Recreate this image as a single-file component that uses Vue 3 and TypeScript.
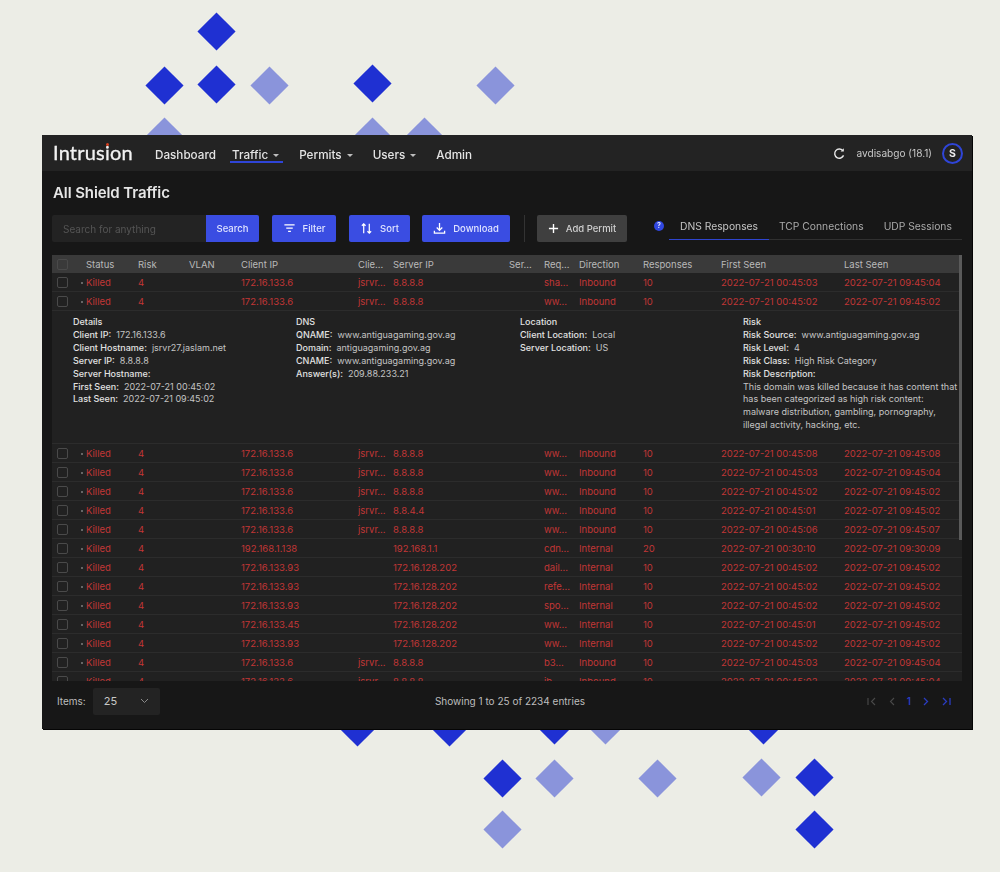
<script setup lang="ts">
interface Row {
  client: string
  host: string
  server: string
  req: string
  dir: string
  resp: string
  first: string
  last: string
  detail?: boolean
}
const r = (client: string, host: string, server: string, req: string, dir: string, resp: string, first: string, last: string, detail = false): Row => ({ client, host, server, req, dir, resp, first: '2022-07-21 ' + first, last: '2022-07-21 ' + last, detail })
const J = 'jsrvr...'
const rows: Row[] = [
  r('172.16.133.6', J, '8.8.8.8', 'sha...', 'Inbound', '10', '00:45:03', '09:45:04'),
  r('172.16.133.6', J, '8.8.8.8', 'ww...', 'Inbound', '10', '00:45:02', '09:45:02', true),
  r('172.16.133.6', J, '8.8.8.8', 'ww...', 'Inbound', '10', '00:45:08', '09:45:08'),
  r('172.16.133.6', J, '8.8.8.8', 'ww...', 'Inbound', '10', '00:45:03', '09:45:04'),
  r('172.16.133.6', J, '8.8.8.8', 'ww...', 'Inbound', '10', '00:45:02', '09:45:02'),
  r('172.16.133.6', J, '8.8.4.4', 'ww...', 'Inbound', '10', '00:45:01', '09:45:02'),
  r('172.16.133.6', J, '8.8.8.8', 'ww...', 'Inbound', '10', '00:45:06', '09:45:07'),
  r('192.168.1.138', '', '192.168.1.1', 'cdn...', 'Internal', '20', '00:30:10', '09:30:09'),
  r('172.16.133.93', '', '172.16.128.202', 'dail...', 'Internal', '10', '00:45:02', '09:45:02'),
  r('172.16.133.93', '', '172.16.128.202', 'refe...', 'Internal', '10', '00:45:02', '09:45:02'),
  r('172.16.133.93', '', '172.16.128.202', 'spo...', 'Internal', '10', '00:45:02', '09:45:02'),
  r('172.16.133.45', '', '172.16.128.202', 'ww...', 'Internal', '10', '00:45:01', '09:45:02'),
  r('172.16.133.93', '', '172.16.128.202', 'ww...', 'Internal', '10', '00:45:02', '09:45:02'),
  r('172.16.133.6', J, '8.8.8.8', 'b3...', 'Inbound', '10', '00:45:03', '09:45:04'),
  r('172.16.133.6', J, '8.8.8.8', 'ib...', 'Inbound', '10', '00:45:03', '09:45:04'),
]
const diamonds: [number, number, boolean][] = [
  [217, 32, false], [165, 86, false], [217, 85, false], [270, 86, true], [373, 84, false], [496, 86, true],
  [165, 137, true], [373, 137, true], [425, 137, true],
  [358, 728, false], [450, 728, false], [555, 726, false], [606, 726, true], [764, 726, false],
  [503, 779, false], [555, 779, true], [658, 779, true], [762, 778, true], [815, 778, false],
  [503, 830, true], [815, 830, false],
]
const pos = (d: [number, number, boolean]) => ({ left: d[0] - 14 + 'px', top: d[1] - 14 + 'px' })
const heads = ['Status', 'Risk', 'VLAN', 'Client IP', 'Clie...', 'Server IP', 'Ser...', 'Req...', 'Direction', 'Responses', 'First Seen', 'Last Seen']
const details = [['Client IP:', '172.16.133.6'], ['Client Hostname:', 'jsrvr27.jaslam.net'], ['Server IP:', '8.8.8.8'], ['Server Hostname:', ''], ['First Seen:', '2022-07-21 00:45:02'], ['Last Seen:', '2022-07-21 09:45:02']]
const dns = [['QNAME:', 'www.antiguagaming.gov.ag'], ['Domain:', 'antiguagaming.gov.ag'], ['CNAME:', 'www.antiguagaming.gov.ag'], ['Answer(s):', '209.88.233.21']]
const loc = [['Client Location:', 'Local'], ['Server Location:', 'US']]
const risk = [['Risk Source:', 'www.antiguagaming.gov.ag'], ['Risk Level:', '4'], ['Risk Class:', 'High Risk Category'], ['Risk Description:', '']]
</script>

<template>
  <div class="page">
    <i v-for="(d, i) in diamonds" :key="i" class="dm" :class="{ light: d[2] }" :style="pos(d)"></i>
    <main class="panel">
      <header class="top">
        <div class="logo">Intrusion<i class="logodot"></i></div>
        <nav class="nav">
          <a>Dashboard</a>
          <a class="active">Traffic<b class="caret"></b></a>
          <a>Permits<b class="caret"></b></a>
          <a>Users<b class="caret"></b></a>
          <a>Admin</a>
        </nav>
        <div class="user">
          <svg width="13" height="13" viewBox="0 0 24 24" fill="none" stroke="#e8e8e8" stroke-width="2.6"><path d="M19.5 15.5A8.5 8.5 0 1 1 18 6.5" /><path d="M20 2.5v6h-6" fill="#e8e8e8" stroke="none" /></svg>
          <span>avdisabgo (18.1)</span>
          <span class="avatar">S</span>
        </div>
      </header>

      <section class="body">
        <h1>All Shield Traffic</h1>
        <div class="tools">
          <div class="search"><span class="ph">Search for anything</span><button class="btn sbtn">Search</button></div>
          <button class="btn fb">
            <svg width="13" height="13" viewBox="0 0 14 14" fill="none" stroke="#fff" stroke-width="1.3"><path d="M1.5 3h11M3.500 6.500h7M5.500 10h3" /></svg>Filter
          </button>
          <button class="btn sb">
            <svg width="13" height="13" viewBox="0 0 14 14" fill="none" stroke="#fff" stroke-width="1.3"><path d="M4 12V2M2 4l2-2 2 2M10 2v10M8 10l2 2 2-2" /></svg>Sort
          </button>
          <button class="btn db">
            <svg width="13" height="13" viewBox="0 0 14 14" fill="none" stroke="#fff" stroke-width="1.4"><path d="M7 1v8M4 6l3 3 3-3M1.500 9.500v2.500h11V9.500" /></svg>Download
          </button>
          <i class="divider"></i>
          <button class="btn add">
            <svg width="11" height="11" viewBox="0 0 12 12" stroke="#fff" stroke-width="1.5"><path d="M6 1v10M1 6h10" /></svg>Add Permit
          </button>
          <span class="info">?</span>
          <div class="tabs">
            <a class="on">DNS Responses</a><a>TCP Connections</a><a>UDP Sessions</a>
          </div>
        </div>

        <div class="table">
          <div class="row head">
            <span class="cb"></span>
            <span v-for="h in heads" :key="h">{{ h }}</span>
          </div>
          <template v-for="(x, i) in rows" :key="i">
            <div class="row">
              <span class="cb"></span>
              <span class="killed">Killed</span><span>4</span><span></span>
              <span>{{ x.client }}</span><span>{{ x.host }}</span><span>{{ x.server }}</span><span></span>
              <span>{{ x.req }}</span><span>{{ x.dir }}</span><span>{{ x.resp }}</span><span>{{ x.first }}</span><span>{{ x.last }}</span>
            </div>
            <div v-if="x.detail" class="detail">
              <div>
                <p class="dh">Details</p>
                <p v-for="d in details" :key="d[0]"><b>{{ d[0] }}</b>{{ d[1] }}</p>
              </div>
              <div>
                <p class="dh">DNS</p>
                <p v-for="d in dns" :key="d[0]"><b>{{ d[0] }}</b>{{ d[1] }}</p>
              </div>
              <div>
                <p class="dh">Location</p>
                <p v-for="d in loc" :key="d[0]"><b>{{ d[0] }}</b>{{ d[1] }}</p>
              </div>
              <div>
                <p class="dh">Risk</p>
                <p v-for="d in risk" :key="d[0]"><b>{{ d[0] }}</b>{{ d[1] }}</p>
                <p>This domain was killed because it has content that<br />has been categorized as high risk content:<br />malware distribution, gambling, pornography,<br />illegal activity, hacking, etc.</p>
              </div>
            </div>
          </template>
          <i class="scroll"></i>
        </div>
      </section>

      <footer class="foot">
        <div class="items"><span>Items:</span><div class="select"><span>25</span><svg width="9" height="6" viewBox="0 0 9 6" fill="none" stroke="#8a8a8a"><path d="M1 1l3.500 3.500L8 1" /></svg></div></div>
        <div class="showing">Showing 1 to 25 of 2234 entries</div>
        <div class="pager">
          <svg width="10" height="9" viewBox="0 0 10 9" fill="none" stroke="#4a4a4a" stroke-width="1.1"><path d="M1 1v7M8 1L4.500 4.500 8 8" /></svg>
          <svg width="6" height="9" viewBox="0 0 6 9" fill="none" stroke="#4a4a4a" stroke-width="1.1"><path d="M5 1L1.500 4.500 5 8" /></svg>
          <span class="pnum">1</span>
          <svg width="6" height="9" viewBox="0 0 6 9" fill="none" stroke="#2a3cc0" stroke-width="1.3"><path d="M1 1l3.500 3.500L1 8" /></svg>
          <svg width="10" height="9" viewBox="0 0 10 9" fill="none" stroke="#2a3cc0" stroke-width="1.3"><path d="M9 1v7M2 1l3.500 3.500L2 8" /></svg>
        </div>
      </footer>
    </main>
  </div>
</template>

<style>
html, body { margin: 0; background: #ecede6; }
</style>

<style scoped>
.page { position: relative; width: 1000px; height: 872px; box-sizing: border-box; padding: 135px 28px 0 42px; background: #ecede6; overflow: hidden; font-family: Inter, "Liberation Sans", sans-serif; }
.dm { position: absolute; width: 27px; height: 27px; background: #1f30d2; transform: rotate(45deg); }
.dm.light { background: #8a94db; }
.panel { position: relative; width: 930px; height: 594px; background: #171717; display: flex; flex-direction: column; color: #d8d8d8; overflow: hidden; filter: blur(0.6px); box-shadow: 1px 1px 0 #050505; }
.top { flex: none; height: 36px; background: #232323; display: flex; align-items: center; padding: 3px 9px 0 11px; box-sizing: border-box; }
.logo { position: relative; font-family: Lato, sans-serif; font-size: 20px; line-height: 19px; margin-top: -4px; font-weight: 400; letter-spacing: 0.2px; -webkit-text-stroke: 0.3px #f2f2f2; color: #f2f2f2; width: 102px; }
.logodot { position: absolute; left: 53px; top: 0; width: 3px; height: 3px; border-radius: 50%; background: #d8401f; }
.nav { display: flex; align-items: center; font-size: 11.7px; font-weight: 500; color: #e4e4e4; }
.nav a { position: relative; margin-right: 16px; }
.nav a:nth-child(2) { margin-right: 20px; }
.nav a:nth-child(3) { margin-right: 20px; }
.nav a:nth-child(4) { margin-right: 20px; }
.nav .active::after { content: ""; position: absolute; left: -2px; right: -4px; top: 13px; height: 2px; background: #2f45d8; }
.caret { display: inline-block; margin-left: 5px; vertical-align: 2px; border: 3px solid transparent; border-top-color: #bdbdbd; border-bottom-width: 0; }
.user { margin-left: auto; margin-top: -3px; display: flex; align-items: center; gap: 10px; font-size: 10.1px; color: #c8c8c8; }
.avatar { width: 21px; height: 21px; box-sizing: border-box; border: 2px solid #2f45d8; border-radius: 50%; display: flex; align-items: center; justify-content: center; font-size: 10.5px; font-weight: 700; color: #f0f0f0; }
.body { flex: 1; min-height: 0; padding: 0 10px 0 10px; overflow: hidden; }
h1 { margin: 13px 0 0 1px; font-size: 15px; line-height: 18px; font-weight: 600; color: #e6e6e6; letter-spacing: -0.1px; }
.tools { display: flex; align-items: flex-start; margin-top: 13px; height: 40px; }
.btn { height: 27px; border: 0; border-radius: 2px; background: #3a4de2; color: #dfe3ff; font: 500 9.5px Inter, sans-serif; display: flex; align-items: center; justify-content: center; gap: 7px; padding: 0; }
.search { width: 207px; height: 27px; background: #232323; border-radius: 2px; display: flex; align-items: center; justify-content: space-between; }
.ph { margin-left: 11px; font-size: 10px; color: #555; }
.sbtn { width: 53px; border-radius: 0 2px 2px 0; }
.fb { width: 64px; margin-left: 13px; }
.sb { width: 61px; margin-left: 13px; }
.db { width: 88px; margin-left: 12px; }
.divider { width: 1px; height: 27px; margin-left: 14px; background: #333; }
.add { width: 90px; margin-left: 12px; background: #3f3f3f; color: #cfcfcf; }
.info { width: 10px; height: 10px; margin: 6px 5px 0 27px; border-radius: 50%; background: #3047e0; color: #dfe3ff; font-size: 7px; line-height: 10px; text-align: center; font-weight: 700; }
.tabs { flex: 1; display: flex; height: 25px; box-sizing: border-box; border-bottom: 1px solid #303030; font-size: 10.3px; color: #a9a9a9; line-height: 23px; }
.tabs a { padding: 0 10px; white-space: nowrap; margin-bottom: -1px; height: 25px; box-sizing: border-box; }
.tabs a.on { color: #c4c4c4; border-bottom: 1px solid #2f45cf; width: 100px; padding: 0 11px; }
.tabs a:nth-child(3) { padding-left: 10px; padding-right: 0; }
.table { position: relative; width: 910px; height: 426px; overflow: hidden; }
.row { display: grid; grid-template-columns: 34px 52px 51px 52px 117px 35px 116px 35px 35px 64px 78px 123px 1fr; align-items: center; height: 19px; padding-top: 1px; background: #212121; border-bottom: 1px solid #2c2c2c; box-sizing: border-box; font-size: 9.5px; color: #c23636; white-space: nowrap; }
.row.head { height: 18px; padding-top: 0; background: #3a3a3a; color: #b9b9b9; border: 0; }
.cb { width: 11px; height: 11px; margin-left: 5px; border: 1px solid #4a4a4a; border-radius: 2px; box-sizing: border-box; }
.killed { position: relative; }
.killed::before { content: ""; position: absolute; left: -5px; top: 5px; width: 2px; height: 2px; background: #666; }
.detail { height: 133px; box-sizing: border-box; padding: 5px 0 0 21px; background: #212121; border-bottom: 1px solid #2c2c2c; display: grid; grid-template-columns: 223px 224px 223px 1fr; font-size: 9px; line-height: 12.9px; color: #c4c4c4; white-space: nowrap; }
.detail p { margin: 0; }
.detail b { font-weight: 500; color: #e2e2e2; margin-right: 5px; }
.dh { font-weight: 500; color: #e2e2e2; }
.scroll { position: absolute; right: 0; top: 0; width: 3px; height: 285px; background: #5a5a5a; }
.foot { flex: none; height: 48px; background: #171717; display: grid; grid-template-columns: 1fr 1fr 1fr; align-items: center; padding: 0 21px 8px 15px; box-sizing: border-box; font-size: 10px; color: #bdbdbd; position: relative; }
.items { display: flex; align-items: center; gap: 7px; }
.select { width: 67px; height: 27px; background: #232323; border-radius: 2px; display: flex; align-items: center; justify-content: space-between; padding: 0 11px; box-sizing: border-box; font-size: 11px; color: #c8c8c8; }
.showing { text-align: center; white-space: nowrap; margin-left: 12px; }
.pager { justify-self: end; display: flex; align-items: center; gap: 12px; }
.pnum { color: #2a3cc0; font-size: 10px; font-weight: 600; }
</style>
